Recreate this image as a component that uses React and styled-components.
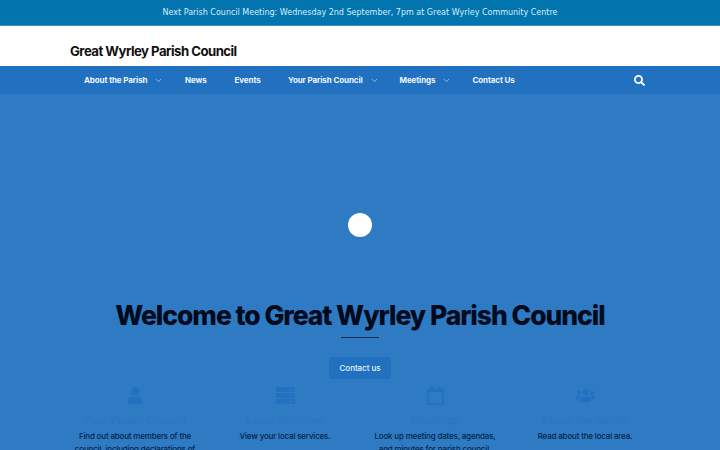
import styled, { createGlobalStyle } from "styled-components"
import { FaUser, FaServer, FaRegCalendar, FaUsers, FaSearch } from "react-icons/fa"
import { FiChevronDown } from "react-icons/fi"

const GlobalStyle = createGlobalStyle`
    html, body {
        margin: 0;
        padding: 0;
        height: 450px;
        overflow: hidden;
        background: #2e7bc4;
    }
`;

const Page = styled.div`
    width: 720px;
    height: 450px;
    overflow: hidden;
    font-family: Inter, "Liberation Sans", sans-serif;
`;

const Notice = styled.div`
    height: 25px;
    background: #0274ae;
    border-bottom: 1px solid #3a93c4;
    display: flex;
    align-items: center;
    justify-content: center;
    font-family: "DejaVu Sans", sans-serif;
    font-size: 8px;
    color: #d6eefa;
`;

const Masthead = styled.header`
    height: 40px;
    background: #fff;
    padding: 0 70px;
    display: flex;
    align-items: flex-end;
`;

const SiteTitle = styled.h1`
    margin: 0 0 7px;
    font-size: 13.2px;
    font-weight: 700;
    letter-spacing: -.53px;
    line-height: 16px;
    color: #111;
`;

const Nav = styled.nav`
    height: 28px;
    background: #2271c0;
    padding: 0 75px 0 84px;
    display: flex;
    align-items: center;
`;

const NavItem = styled.a`
    display: flex;
    align-items: center;
    flex-shrink: 0;
    font-size: 8px;
    font-weight: 700;
    letter-spacing: -.1px;
    color: #eef5fc;
    margin-right: ${p => p.$gap}px;
    white-space: nowrap;

    svg {
        margin-left: 7px;
        opacity: .75;
    }
`;

const SearchButton = styled.span`
    margin-left: auto;
    display: flex;
    color: #fff;
`;

const Hero = styled.main`
    height: 356px;
    overflow: hidden;
    background: #2e7bc4;
    padding-top: 119px;
    box-sizing: border-box;
    display: flex;
    flex-direction: column;
    align-items: center;

    & > * {
        flex-shrink: 0;
    }
`;

const Dot = styled.div`
    width: 24px;
    height: 24px;
    border-radius: 50%;
    background: #fff;
`;

const Heading = styled.h2`
    margin: 60px 0 0;
    font-size: 26.5px;
    line-height: 36px;
    font-weight: 800;
    letter-spacing: -1.05px;
    color: #000a1c;
    white-space: nowrap;
`;

const Rule = styled.div`
    width: 38px;
    height: 1px;
    background: #0f2c52;
    margin-top: 4px;
`;

const Button = styled.a`
    margin-top: 19px;
    width: 62px;
    height: 22px;
    background: #2271c0;
    color: #e6f1fb;
    font-size: 8px;
    font-weight: 500;
    letter-spacing: -.05px;
    display: flex;
    align-items: center;
    justify-content: center;
`;

const Features = styled.section`
    margin-top: 6px;
    width: 600px;
    display: grid;
    grid-template-columns: repeat(4, 1fr);
`;

const Feature = styled.div`
    display: flex;
    flex-direction: column;
    align-items: center;
    text-align: center;
    color: #2271c0;
`;

const IconSlot = styled.div`
    height: 20px;
    display: flex;
    align-items: center;
    justify-content: center;
`;

const FeatureTitle = styled.h3`
    margin: 8px 0 0;
    font-size: 11px;
    line-height: 14px;
    font-weight: 500;
    color: #2a76c1;
`;

const FeatureText = styled.p`
    margin: 3px 0 0;
    width: 130px;
    font-size: 8px;
    font-weight: 500;
    letter-spacing: -.18px;
    line-height: 13px;
    color: #05234a;
`;

const navItems = [
    { label: "About the Parish", gap: 21.5, caret: true },
    { label: "News", gap: 28 },
    { label: "Events", gap: 27.5 },
    { label: "Your Parish Council", gap: 21, caret: true },
    { label: "Meetings", gap: 21, caret: true },
    { label: "Contact Us", gap: 0 },
];

const features = [
    { Icon: FaUser, size: 17, title: "Your Parish Council", text: "Find out about members of the council, including declarations of interest." },
    { Icon: FaServer, size: 19, title: "Local Services", text: "View your local services." },
    { Icon: FaRegCalendar, size: 19, title: "Meetings", text: "Look up meeting dates, agendas, and minutes for parish council." },
    { Icon: FaUsers, size: 19, title: "About the parish", text: "Read about the local area." },
];

export default function App() {
    return (
        <Page>
            <GlobalStyle />
            <Notice>Next Parish Council Meeting: Wednesday 2nd September, 7pm at Great Wyrley Community Centre</Notice>
            <Masthead>
                <SiteTitle>Great Wyrley Parish Council</SiteTitle>
            </Masthead>
            <Nav>
                {navItems.map(item => (
                    <NavItem key={item.label} $gap={item.gap}>
                        {item.label}
                        {item.caret && <FiChevronDown size={9} />}
                    </NavItem>
                ))}
                <SearchButton><FaSearch size={11} /></SearchButton>
            </Nav>
            <Hero>
                <Dot />
                <Heading>Welcome to Great Wyrley Parish Council</Heading>
                <Rule />
                <Button>Contact us</Button>
                <Features>
                    {features.map(({ Icon, size, title, text }) => (
                        <Feature key={title}>
                            <IconSlot><Icon size={size} /></IconSlot>
                            <FeatureTitle>{title}</FeatureTitle>
                            <FeatureText>{text}</FeatureText>
                        </Feature>
                    ))}
                </Features>
            </Hero>
        </Page>
    )
}
